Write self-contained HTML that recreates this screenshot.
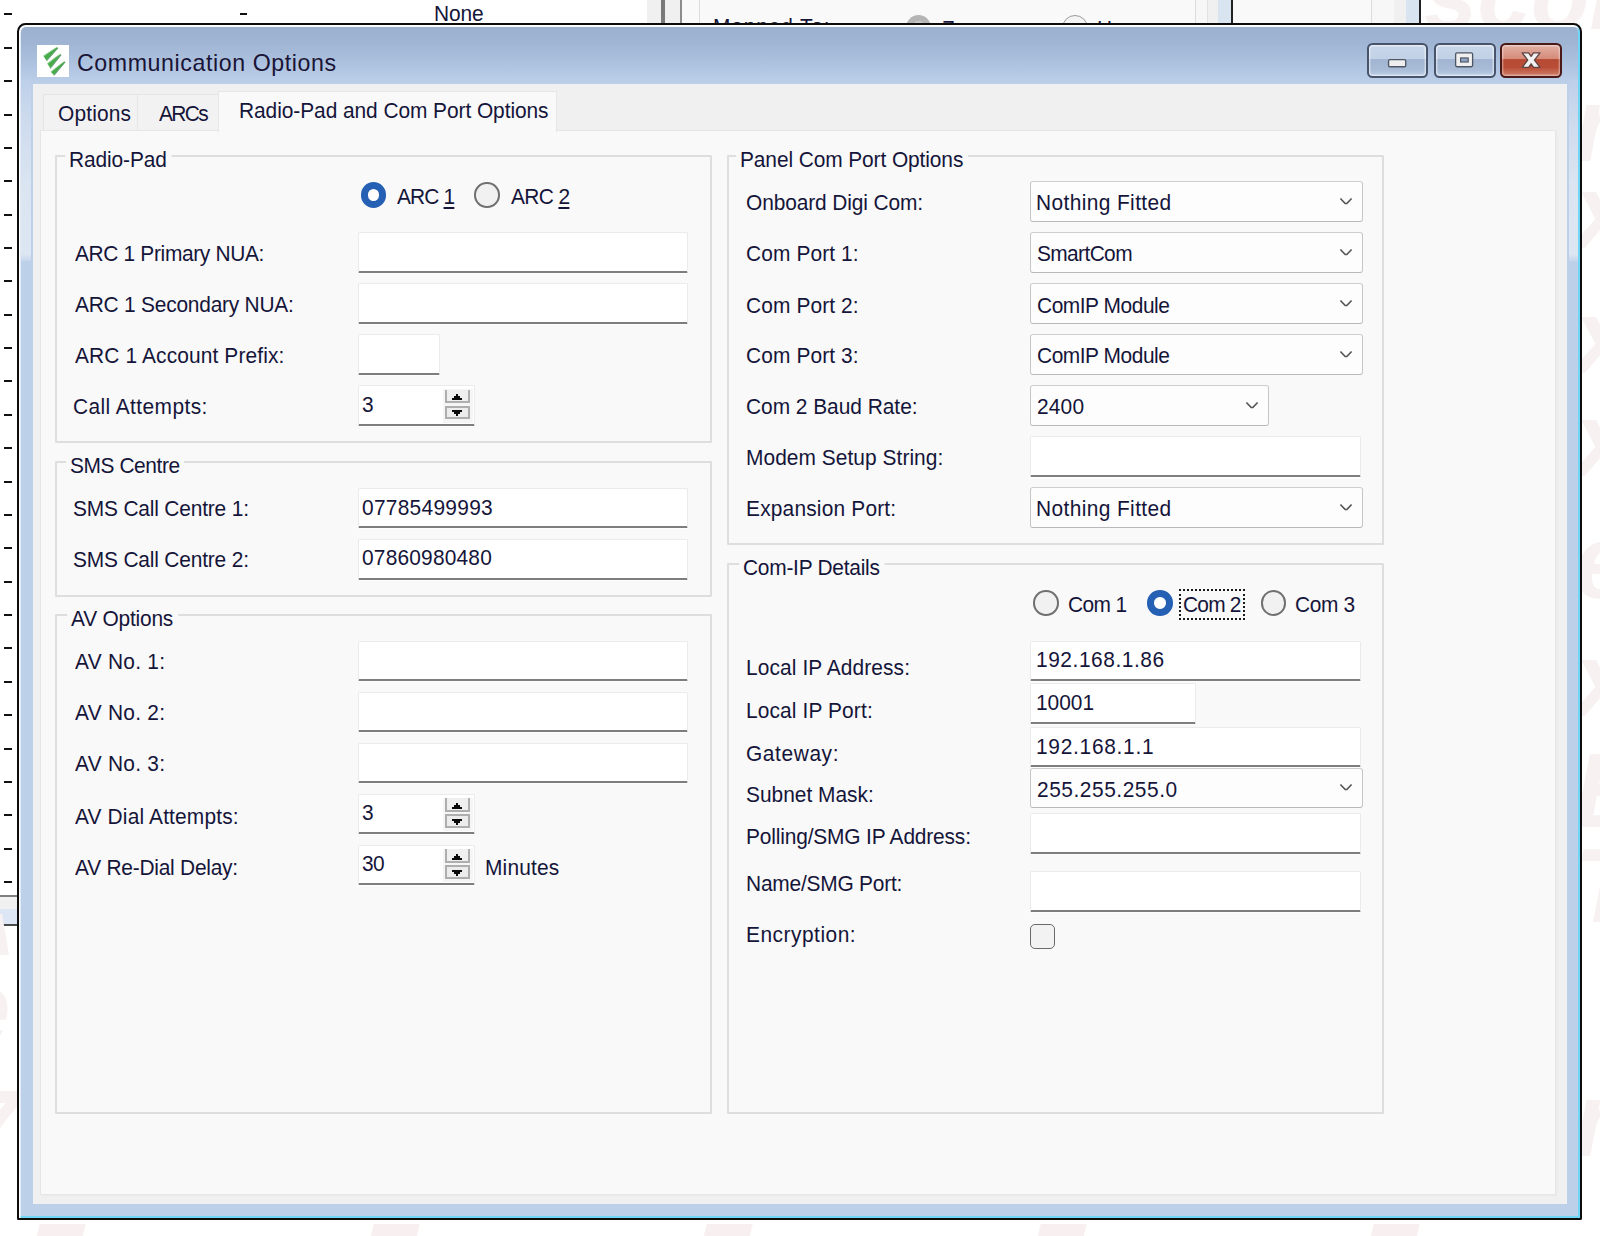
<!DOCTYPE html><html><head><meta charset="utf-8"><title>Communication Options</title><style>
html,body{margin:0;padding:0;}
body{width:1600px;height:1236px;overflow:hidden;background:#fff;position:relative;font-family:"Liberation Sans",sans-serif;font-size:21px;color:#15153a;}
.bg,.bg *{position:absolute;}
.bg{left:0;top:0;width:1600px;height:1236px;overflow:hidden;}
.dash{left:4px;width:7.5px;height:2px;background:#111;}
.wm{color:#f8f1f1;font-weight:bold;font-style:italic;white-space:pre;}
.win,.win>*{position:absolute;}
.win{left:0;top:0;width:1600px;height:1236px;}
.frame{left:17.3px;top:23.2px;width:1565.1px;height:1196.9px;box-sizing:border-box;border:2.2px solid #0c0c0c;border-radius:8.5px 8.5px 1.5px 1.5px;
 background:#bdd0e9;box-shadow:inset 1.6px 2px 0 rgba(255,255,255,.95), inset -2px -2px 0 #6fd6f8;}
.tbar{left:21.1px;top:27.4px;width:1557.3px;height:56.8px;border-radius:5px 5px 0 0;
 background:linear-gradient(180deg,#9cb1cf 0,#a0b5d3 16px,#aabfdc 32px,#b6cae6 48px,#bdd0e9 57px);}
.hl{top:80px;width:9.6px;height:181px;background:linear-gradient(180deg,#bdd0e9 0,#cfdcee 25%,#dbe5f2 60%,#dde7f3 96%,#c6d6ec 100%);}
.client{left:33.1px;top:84px;width:1533.6px;height:1120.4px;background:#f0f0f0;}
.page{left:39.5px;top:130.3px;width:1516px;height:1065.2px;box-sizing:border-box;background:#f9f9f9;border:1.5px solid #e6e6e6;box-shadow:1.5px 1.5px 0 #ebebeb;}
.tab{box-sizing:border-box;background:#f2f2f2;border:1.8px solid #e5e5e5;border-bottom:none;}
.t1{left:43.3px;top:94.1px;width:95.6px;height:37px;}
.t2{left:137.1px;top:94.1px;width:82.5px;height:37px;}
.t3{left:218px;top:90.8px;width:338.5px;height:41.3px;background:#f9f9f9;border-color:#e6e6e6;}
.grp{box-sizing:border-box;border:2px solid #dedede;border-radius:1px;}
.inp{box-sizing:border-box;background:#fff;border:1.5px solid #ebebeb;border-bottom:2.2px solid #7e7e7e;border-radius:1.5px;box-shadow:0 1px 0 #fdfdfd;}
.cmb{box-sizing:border-box;background:#fdfdfd;border:1.8px solid #c6c6c6;border-top-color:#cecece;border-bottom-color:#b9b9b9;border-radius:3px;}
.chev{position:absolute;right:7.9px;top:50%;margin-top:-3.7px;width:16px;height:8px;overflow:visible;}
.chev path{fill:none;stroke:#555;stroke-width:2.1;stroke-linejoin:miter;}
.sbg{position:absolute;left:84.5px;top:3.2px;width:30px;height:33.6px;background:#f5f5f5;display:block;}
.sb{position:absolute;left:86.1px;width:25.4px;box-sizing:border-box;background:#efefef;border:2px solid #aeaeae;display:block;}
.sb.up{top:3.7px;height:13.8px;border-top:none;}
.sb.dn{top:19.8px;height:13.7px;background:#ececec;}
.sb svg{position:absolute;left:50%;width:10px;height:6px;margin-left:-5px;}
.sb.up svg{top:4.6px;}.sb.dn svg{top:2.5px;}
.sb path{fill:#0a0a0a;}
.rad{width:25.5px;height:25.5px;box-sizing:border-box;border-radius:50%;border:2px solid #707070;background:#f1f1f1;}
.rad.on{border:7.75px solid #2660b4;background:#fff;}
.chk{width:25px;height:25px;box-sizing:border-box;border:1.6px solid #6a6a6a;border-radius:5px;background:#f2f2f2;}
.focus{box-sizing:border-box;border:2px dotted #1a1a1a;}
.tx{white-space:pre;line-height:25px;font-size:22px;transform:scaleX(0.95);transform-origin:0 0;}
.tx u{text-decoration-thickness:1.5px;text-underline-offset:2.5px;}
.gl{background:#f9f9f9;box-shadow:-4px 0 0 #f9f9f9,5px 0 0 #f9f9f9;}
.ttl{left:77px;top:49.6px;font-size:23.2px;line-height:1.149;white-space:pre;color:#1a1436;letter-spacing:0.58px;}
.ico{left:37px;top:45px;width:32px;height:32px;background:#fff;}
.cb{top:43px;height:35px;box-sizing:border-box;border:2.1px solid #48546c;border-radius:5.5px;
  background:linear-gradient(180deg,#c9d7ea 0,#c2d1e6 44%,#a1b5d2 47%,#a8bbd7 78%,#bccde5 100%);box-shadow:inset 0 0 0 1.4px rgba(255,255,255,.5);}
.cb.cl{border-color:#4a1a18;background:linear-gradient(180deg,#e2b1a5 0,#d68b7a 44%,#b64a33 47%,#b94d37 72%,#cf8069 100%);box-shadow:inset 0 0 0 1.4px rgba(255,255,255,.35);}
.cb svg{position:absolute;left:0;top:0;width:100%;height:100%;}

</style></head><body>
<div class="bg">
<div style="left:647px;top:0px;width:33px;height:24px;background:#f0f0f0"></div>
<div style="left:660.9px;top:0px;width:3.8px;height:24px;background:#7a7a7a"></div>
<div style="left:680px;top:0px;width:1.8px;height:24px;background:#8c8c8c"></div>
<div style="left:681.8px;top:0px;width:17.2px;height:24px;background:#f9f9f9"></div>
<div style="left:699px;top:0px;width:1px;height:24px;background:#dcdcdc"></div>
<div style="left:700px;top:0px;width:494.6px;height:24px;background:#f9f9f9"></div>
<div style="left:1194.6px;top:0px;width:1px;height:24px;background:#dcdcdc"></div>
<div style="left:1195.6px;top:0px;width:11px;height:24px;background:#f7f7f7"></div>
<div style="left:1206.6px;top:0px;width:1px;height:24px;background:#e2e2e2"></div>
<div style="left:1207.6px;top:0px;width:10.2px;height:24px;background:#f0f0f0"></div>
<div style="left:1217.8px;top:0px;width:13.4px;height:24px;background:#d9e4f1"></div>
<div style="left:1231.2px;top:0px;width:1.8px;height:24px;background:#222"></div>
<div style="left:1233px;top:0px;width:138.4px;height:24px;background:#f9f9f9"></div>
<div style="left:1371.4px;top:0px;width:1px;height:24px;background:#dcdcdc"></div>
<div style="left:1372.4px;top:0px;width:21.8px;height:24px;background:#f7f7f7"></div>
<div style="left:1394.2px;top:0px;width:11.7px;height:24px;background:#f0f0f0"></div>
<div style="left:1405.9px;top:0px;width:13.4px;height:24px;background:#d9e4f1"></div>
<div style="left:1419.3px;top:0px;width:1.8px;height:24px;background:#222"></div>
<span style="left:240px;top:13px;width:7px;height:2px;background:#111"></span>
<span class="tx" style="left:433.8px;top:0.5px;letter-spacing:-0.1px">None</span>
<span class="tx" style="left:712.5px;top:14px;letter-spacing:0.9px">Mapped To:</span>
<div style="left:906px;top:14.5px;width:25px;height:25px;border-radius:50%;background:#c9c9c9;box-sizing:border-box;border:6px solid #b5b5b5"></div>
<span class="tx" style="left:942px;top:16px;">Z</span>
<div style="left:1062px;top:15px;width:26px;height:26px;border-radius:50%;background:#f4f4f4;box-sizing:border-box;border:1.4px solid #9a9a9a"></div>
<span class="tx" style="left:1097px;top:16px;">H</span>
<div class="dash" style="top:13px"></div>
<div class="dash" style="top:47px"></div>
<div class="dash" style="top:80px"></div>
<div class="dash" style="top:114px"></div>
<div class="dash" style="top:147px"></div>
<div class="dash" style="top:180px"></div>
<div class="dash" style="top:214px"></div>
<div class="dash" style="top:247px"></div>
<div class="dash" style="top:280px"></div>
<div class="dash" style="top:314px"></div>
<div class="dash" style="top:347px"></div>
<div class="dash" style="top:380px"></div>
<div class="dash" style="top:414px"></div>
<div class="dash" style="top:447px"></div>
<div class="dash" style="top:481px"></div>
<div class="dash" style="top:514px"></div>
<div class="dash" style="top:547px"></div>
<div class="dash" style="top:581px"></div>
<div class="dash" style="top:614px"></div>
<div class="dash" style="top:647px"></div>
<div class="dash" style="top:681px"></div>
<div class="dash" style="top:714px"></div>
<div class="dash" style="top:748px"></div>
<div class="dash" style="top:781px"></div>
<div class="dash" style="top:814px"></div>
<div class="dash" style="top:848px"></div>
<div class="dash" style="top:881px"></div>
<div style="left:0px;top:895.2px;width:18px;height:1.6px;background:#7f7f7f"></div>
<div style="left:0px;top:896.8px;width:18px;height:12.6px;background:#f0f0f0"></div>
<div style="left:0px;top:909.4px;width:18px;height:15px;background:#dce6f4"></div>
<div style="left:0px;top:924.4px;width:18px;height:1.3px;background:#4a4a4a"></div>
<span class="wm" style="left:1424px;top:-52px;font-size:96px;line-height:1">scom</span>
<span class="wm" style="left:1574px;top:72px;font-size:105px;line-height:1">r</span>
<span class="wm" style="left:1574px;top:159px;font-size:105px;line-height:1">x</span>
<span class="wm" style="left:1574px;top:284px;font-size:105px;line-height:1">x</span>
<span class="wm" style="left:1574px;top:387px;font-size:105px;line-height:1">x</span>
<span class="wm" style="left:1574px;top:509px;font-size:105px;line-height:1">e</span>
<span class="wm" style="left:1574px;top:627px;font-size:105px;line-height:1">x</span>
<span class="wm" style="left:1574px;top:738px;font-size:105px;line-height:1">E</span>
<span class="wm" style="left:1574px;top:833px;font-size:105px;line-height:1">T</span>
<span class="wm" style="left:1574px;top:1067px;font-size:105px;line-height:1">r</span>
<span class="wm" style="left:-48px;top:955px;font-size:105px;line-height:1">e</span>
<span class="wm" style="left:-40px;top:1075px;font-size:105px;line-height:1">7</span>
<span class="wm" style="left:-30px;top:905px;font-size:60px;line-height:1">A</span>
<div style="left:38.0px;top:1224px;width:46px;height:14px;background:#f8f0f0;transform:skewX(-14deg)"></div>
<div style="left:371.5px;top:1224px;width:46px;height:14px;background:#f8f0f0;transform:skewX(-14deg)"></div>
<div style="left:705.0px;top:1224px;width:46px;height:14px;background:#f8f0f0;transform:skewX(-14deg)"></div>
<div style="left:1038.5px;top:1224px;width:46px;height:14px;background:#f8f0f0;transform:skewX(-14deg)"></div>
<div style="left:1372.0px;top:1224px;width:46px;height:14px;background:#f8f0f0;transform:skewX(-14deg)"></div>
</div>
<div class="win"><div class="frame"></div>
<div class="tbar"></div>
<div class="hl" style="left:21.3px"></div><div class="hl" style="left:1568.8px"></div>
<div class="ico"><svg width="32" height="32" viewBox="0 0 32 32"><g fill="#a9d9ab"><path d="M20 1.7 L6 10.4 L7.6 13.4 Z"/><path d="M23.2 8.3 L9.9 18.2 L11.6 21.2 Z"/><path d="M27.3 15.9 L13.4 26.6 L15.2 29 Z"/></g><g fill="#48ab4b"><path d="M20.2 2.1 L7 11.2 L9.4 15.8 L20.9 3 Z"/><path d="M23.4 8.9 L10.9 18.8 L13.2 23.3 L24.1 9.8 Z"/><path d="M27.5 16.3 L14.4 26.9 L16.9 30.3 L28.1 17 Z"/></g><g fill="none" stroke="#3f7c55" stroke-width="1" opacity=".7"><path d="M9.6 16 L21 3.1"/><path d="M13.4 23.5 L24.2 9.9"/><path d="M17.1 30.5 L28.2 17.1"/></g></svg></div>
<span class="ttl">Communication Options</span>
<div class="cb" style="left:1367px;width:61.4px"><svg viewBox="0 0 61.4 35"><rect x="20.4" y="16.6" width="19.4" height="8" rx="1.5" fill="#efefef" stroke="#4f5663" stroke-width="1.5"/></svg></div>
<div class="cb" style="left:1433.6px;width:62px"><svg viewBox="0 0 62 35"><rect x="20.4" y="8.9" width="19.2" height="15.7" rx="1.6" fill="#efefef" stroke="#4f5663" stroke-width="1.5"/><rect x="26" y="14.6" width="8.6" height="4.6" fill="#8ea2c2" stroke="#4f5663" stroke-width="1.3"/></svg></div>
<div class="cb cl" style="left:1500.1px;width:62.1px"><svg viewBox="0 0 62.1 35"><path d="M21 8.8 h7.4 l2.7 4 l2.7 -4 h7.4 l-6.3 8.2 l6.3 8.2 h-7.4 l-2.7 -4 l-2.7 4 h-7.4 l6.3 -8.2 z" fill="#f1f1f1" stroke="#5e4340" stroke-width="1.5" stroke-linejoin="round"/></svg></div>

<div class="client"></div>
<div class="tab t1"></div><div class="tab t2"></div><div class="page"></div><div class="tab t3"></div>
<div class="grp" style="left:55px;top:155px;width:657px;height:288px"></div>
<div class="grp" style="left:55px;top:461px;width:657px;height:135.5px"></div>
<div class="grp" style="left:55px;top:614px;width:657px;height:500px"></div>
<div class="grp" style="left:727.3px;top:155px;width:656.9px;height:390px"></div>
<div class="grp" style="left:727.3px;top:562.8px;width:656.9px;height:551.2px"></div>
<div class="inp" style="left:357.5px;top:232px;width:330px;height:41px"></div>
<div class="inp" style="left:357.5px;top:283px;width:330px;height:41px"></div>
<div class="inp" style="left:357.5px;top:334px;width:82.5px;height:41px"></div>
<div class="inp" style="left:357.5px;top:487.5px;width:330px;height:40.5px"></div>
<div class="inp" style="left:357.5px;top:539px;width:330px;height:40.5px"></div>
<div class="inp" style="left:357.5px;top:640.5px;width:330px;height:40.5px"></div>
<div class="inp" style="left:357.5px;top:691.5px;width:330px;height:40.5px"></div>
<div class="inp" style="left:357.5px;top:742.5px;width:330px;height:40.5px"></div>
<div class="inp" style="left:1030px;top:435.5px;width:330.5px;height:41px"></div>
<div class="inp" style="left:1030px;top:640.5px;width:330.5px;height:40.5px"></div>
<div class="inp" style="left:1030px;top:683px;width:165.5px;height:41px"></div>
<div class="inp" style="left:1030px;top:726.5px;width:330.5px;height:40.7px"></div>
<div class="inp" style="left:1030px;top:813px;width:330.5px;height:40.5px"></div>
<div class="inp" style="left:1030px;top:871.3px;width:330.5px;height:41.2px"></div>
<div class="inp" style="left:357.5px;top:385px;width:117.5px;height:40.8px"><i class="sbg"></i><i class="sb up"><svg viewBox="0 0 10 6"><path d="M4 0h2v2h2v2h2v2H0V4h2V2h2z"/></svg></i><i class="sb dn"><svg viewBox="0 0 10 6"><path d="M0 0h10v2H8v2H6v2H4V4H2V2H0z"/></svg></i></div>
<div class="inp" style="left:357.5px;top:793.7px;width:117.5px;height:40.3px"><i class="sbg"></i><i class="sb up"><svg viewBox="0 0 10 6"><path d="M4 0h2v2h2v2h2v2H0V4h2V2h2z"/></svg></i><i class="sb dn"><svg viewBox="0 0 10 6"><path d="M0 0h10v2H8v2H6v2H4V4H2V2H0z"/></svg></i></div>
<div class="inp" style="left:357.5px;top:844.7px;width:117.5px;height:40.3px"><i class="sbg"></i><i class="sb up"><svg viewBox="0 0 10 6"><path d="M4 0h2v2h2v2h2v2H0V4h2V2h2z"/></svg></i><i class="sb dn"><svg viewBox="0 0 10 6"><path d="M0 0h10v2H8v2H6v2H4V4H2V2H0z"/></svg></i></div>
<div class="cmb" style="left:1029.7px;top:180.8px;width:333px;height:40.9px"><svg class="chev" viewBox="0 0 16 10"><path d="M1 0.6 L7 6.9 H9 L15 0.6"/></svg></div>
<div class="cmb" style="left:1029.7px;top:231.8px;width:333px;height:40.9px"><svg class="chev" viewBox="0 0 16 10"><path d="M1 0.6 L7 6.9 H9 L15 0.6"/></svg></div>
<div class="cmb" style="left:1029.7px;top:282.8px;width:333px;height:40.9px"><svg class="chev" viewBox="0 0 16 10"><path d="M1 0.6 L7 6.9 H9 L15 0.6"/></svg></div>
<div class="cmb" style="left:1029.7px;top:333.8px;width:333px;height:40.9px"><svg class="chev" viewBox="0 0 16 10"><path d="M1 0.6 L7 6.9 H9 L15 0.6"/></svg></div>
<div class="cmb" style="left:1029.7px;top:384.8px;width:239px;height:40.9px"><svg class="chev" viewBox="0 0 16 10"><path d="M1 0.6 L7 6.9 H9 L15 0.6"/></svg></div>
<div class="cmb" style="left:1029.7px;top:486.8px;width:333px;height:40.9px"><svg class="chev" viewBox="0 0 16 10"><path d="M1 0.6 L7 6.9 H9 L15 0.6"/></svg></div>
<div class="cmb" style="left:1029.7px;top:767.8px;width:333px;height:40.7px"><svg class="chev" viewBox="0 0 16 10"><path d="M1 0.6 L7 6.9 H9 L15 0.6"/></svg></div>
<div class="rad on" style="left:360.75px;top:182.35px"></div>
<div class="rad" style="left:474.35px;top:182.35px"></div>
<div class="rad" style="left:1033.25px;top:590.45px"></div>
<div class="rad on" style="left:1147.15px;top:590.45px"></div>
<div class="rad" style="left:1260.55px;top:590.45px"></div>
<div class="chk" style="left:1029.75px;top:924.25px"></div>
<div class="focus" style="left:1178.5px;top:589px;width:66.5px;height:30.5px"></div>
<span class="tx" style="left:57.83px;top:101.25px;letter-spacing:0.178px">Options</span>
<span class="tx" style="left:159.38px;top:101.25px;letter-spacing:-1.726px">ARCs</span>
<span class="tx" style="left:239.03px;top:97.75px;letter-spacing:-0.064px">Radio-Pad and Com Port Options</span>
<span class="tx gl" style="left:68.78px;top:147px;letter-spacing:-0.108px">Radio-Pad</span>
<span class="tx gl" style="left:69.58px;top:453.25px;letter-spacing:-0.439px">SMS Centre</span>
<span class="tx gl" style="left:71.13px;top:606.25px;letter-spacing:-0.216px">AV Options</span>
<span class="tx gl" style="left:740.48px;top:147px;letter-spacing:-0.101px">Panel Com Port Options</span>
<span class="tx gl" style="left:742.58px;top:554.5px;letter-spacing:-0.262px">Com-IP Details</span>
<span class="tx" style="left:75.07px;top:240.75px;letter-spacing:-0.354px">ARC 1 Primary NUA:</span>
<span class="tx" style="left:74.63px;top:292px;letter-spacing:-0.229px">ARC 1 Secondary NUA:</span>
<span class="tx" style="left:74.63px;top:343.25px;letter-spacing:0.135px">ARC 1 Account Prefix:</span>
<span class="tx" style="left:73.33px;top:394px;letter-spacing:0.443px">Call Attempts:</span>
<span class="tx" style="left:73.33px;top:496.25px;letter-spacing:-0.182px">SMS Call Centre 1:</span>
<span class="tx" style="left:73.33px;top:547px;letter-spacing:-0.182px">SMS Call Centre 2:</span>
<span class="tx" style="left:74.63px;top:649px;letter-spacing:0.271px">AV No. 1:</span>
<span class="tx" style="left:74.63px;top:699.5px;letter-spacing:0.271px">AV No. 2:</span>
<span class="tx" style="left:74.63px;top:750.75px;letter-spacing:0.271px">AV No. 3:</span>
<span class="tx" style="left:74.63px;top:803.75px;letter-spacing:0.164px">AV Dial Attempts:</span>
<span class="tx" style="left:74.63px;top:855px;letter-spacing:-0.245px">AV Re-Dial Delay:</span>
<span class="tx" style="left:484.53px;top:855.25px;letter-spacing:0.199px">Minutes</span>
<span class="tx" style="left:396.63px;top:184px;letter-spacing:-0.892px">ARC <u>1</u></span>
<span class="tx" style="left:510.63px;top:184px;letter-spacing:-0.671px">ARC <u>2</u></span>
<span class="tx" style="left:1068.33px;top:592px;letter-spacing:-0.648px">Com 1</span>
<span class="tx" style="left:1182.53px;top:592px;letter-spacing:-0.837px">Com 2</span>
<span class="tx" style="left:1295.33px;top:592px;letter-spacing:-0.345px">Com 3</span>
<span class="tx" style="left:361.83px;top:392px;letter-spacing:1.771px">3</span>
<span class="tx" style="left:362.08px;top:494.5px;letter-spacing:0.297px">07785499993</span>
<span class="tx" style="left:362.08px;top:545.25px;letter-spacing:0.202px">07860980480</span>
<span class="tx" style="left:361.83px;top:800.25px;letter-spacing:1.771px">3</span>
<span class="tx" style="left:362.08px;top:851.25px;letter-spacing:-0.574px">30</span>
<span class="tx" style="left:746.33px;top:190px;letter-spacing:-0.116px">Onboard Digi Com:</span>
<span class="tx" style="left:746.33px;top:241.25px;letter-spacing:0.121px">Com Port 1:</span>
<span class="tx" style="left:746.33px;top:292.5px;letter-spacing:0.121px">Com Port 2:</span>
<span class="tx" style="left:746.33px;top:343.25px;letter-spacing:0.121px">Com Port 3:</span>
<span class="tx" style="left:746.33px;top:394px;letter-spacing:-0.027px">Com 2 Baud Rate:</span>
<span class="tx" style="left:745.53px;top:445.25px;letter-spacing:0.054px">Modem Setup String:</span>
<span class="tx" style="left:745.53px;top:495.75px;letter-spacing:0.195px">Expansion Port:</span>
<span class="tx" style="left:745.53px;top:654.5px;letter-spacing:0.111px">Local IP Address:</span>
<span class="tx" style="left:745.53px;top:698.25px;letter-spacing:0.130px">Local IP Port:</span>
<span class="tx" style="left:746.33px;top:740.75px;letter-spacing:0.629px">Gateway:</span>
<span class="tx" style="left:746.33px;top:782px;letter-spacing:-0.002px">Subnet Mask:</span>
<span class="tx" style="left:745.53px;top:824px;letter-spacing:-0.167px">Polling/SMG IP Address:</span>
<span class="tx" style="left:745.53px;top:871.25px;letter-spacing:-0.229px">Name/SMG Port:</span>
<span class="tx" style="left:745.53px;top:922px;letter-spacing:0.532px">Encryption:</span>
<span class="tx" style="left:1035.78px;top:190px;letter-spacing:0.410px">Nothing Fitted</span>
<span class="tx" style="left:1036.58px;top:241.25px;letter-spacing:-0.651px">SmartCom</span>
<span class="tx" style="left:1036.58px;top:292.5px;letter-spacing:-0.477px">ComIP Module</span>
<span class="tx" style="left:1036.58px;top:343.25px;letter-spacing:-0.477px">ComIP Module</span>
<span class="tx" style="left:1036.58px;top:394px;letter-spacing:0.188px">2400</span>
<span class="tx" style="left:1035.78px;top:495.75px;letter-spacing:0.410px">Nothing Fitted</span>
<span class="tx" style="left:1037.33px;top:777px;letter-spacing:0.571px">255.255.255.0</span>
<span class="tx" style="left:1036.03px;top:647px;letter-spacing:0.584px">192.168.1.86</span>
<span class="tx" style="left:1036.03px;top:690.25px;letter-spacing:-0.023px">10001</span>
<span class="tx" style="left:1036.03px;top:733.75px;letter-spacing:0.756px">192.168.1.1</span>
</div></body></html>
